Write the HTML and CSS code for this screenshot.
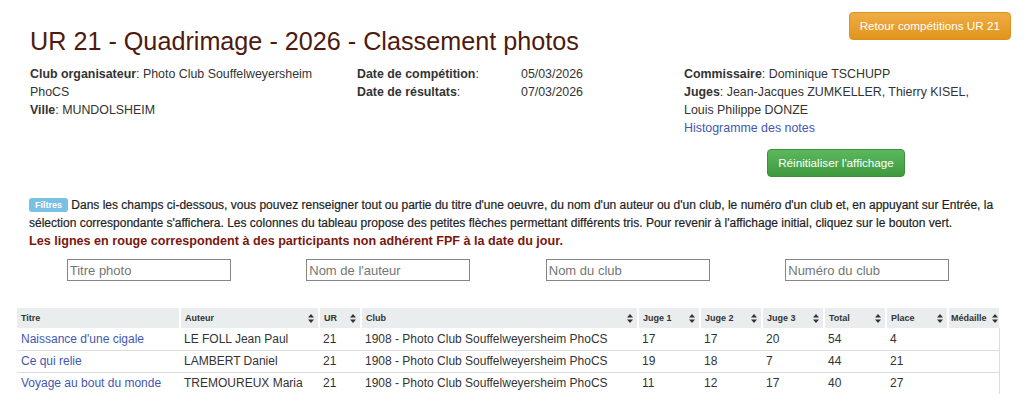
FILE: index.html
```html
<!DOCTYPE html>
<html lang="fr">
<head>
<meta charset="utf-8">
<title>UR 21 - Quadrimage - 2026 - Classement photos</title>
<link rel="stylesheet" href="styles.css">
</head>
<body>
<div class="top">
  <h1 class="title">UR 21 - Quadrimage - 2026 - Classement photos</h1>
  <a class="btn btn-warning" href="#">Retour compétitions UR 21</a>
</div>

<div class="info">
  <div class="col">
    <div><b>Club organisateur</b>: Photo Club Souffelweyersheim PhoCS</div>
    <div><b>Ville</b>: MUNDOLSHEIM</div>
  </div>
  <div class="col dates">
    <b>Date de compétition</b><span class="val">05/03/2026</span>
    <b>Date de résultats</b><span class="val">07/03/2026</span>
  </div>
  <div class="col">
    <div><b>Commissaire</b>: Dominique TSCHUPP</div>
    <div><b>Juges</b>: Jean-Jacques ZUMKELLER, Thierry KISEL, Louis Philippe DONZE</div>
    <div><a class="link" href="#">Histogramme des notes</a></div>
    <div class="reset-wrap"><a class="btn btn-success" href="#">Réinitialiser l'affichage</a></div>
  </div>
</div>

<div class="filters">
  <p class="help"><span class="label-info">Filtres</span> Dans les champs ci-dessous, vous pouvez renseigner tout ou partie du titre d'une oeuvre, du nom d'un auteur ou d'un club, le numéro d'un club et, en appuyant sur Entrée, la sélection correspondante s'affichera. Les colonnes du tableau propose des petites flèches permettant différents tris. Pour revenir à l'affichage initial, cliquez sur le bouton vert.</p>
  <p class="warn">Les lignes en rouge correspondent à des participants non adhérent FPF à la date du jour.</p>
</div>

<div class="search">
  <input type="text" placeholder="Titre photo">
  <input type="text" placeholder="Nom de l'auteur">
  <input type="text" placeholder="Nom du club">
  <input type="text" placeholder="Numéro du club">
</div>

<table class="results">
  <colgroup>
    <col class="c-titre"><col class="c-auteur"><col class="c-ur"><col class="c-club">
    <col class="c-j"><col class="c-j"><col class="c-j"><col class="c-j"><col class="c-j"><col class="c-med">
  </colgroup>
  <thead>
    <tr>
      <th><div class="th">Titre</div></th>
      <th><div class="th">Auteur<svg class="sort" viewBox="0 0 6 9"><path d="M3 0L6 3.6H0Z M3 9L6 5.4H0Z"/></svg></div></th>
      <th><div class="th">UR<svg class="sort" viewBox="0 0 6 9"><path d="M3 0L6 3.6H0Z M3 9L6 5.4H0Z"/></svg></div></th>
      <th><div class="th">Club<svg class="sort" viewBox="0 0 6 9"><path d="M3 0L6 3.6H0Z M3 9L6 5.4H0Z"/></svg></div></th>
      <th><div class="th">Juge 1<svg class="sort" viewBox="0 0 6 9"><path d="M3 0L6 3.6H0Z M3 9L6 5.4H0Z"/></svg></div></th>
      <th><div class="th">Juge 2<svg class="sort" viewBox="0 0 6 9"><path d="M3 0L6 3.6H0Z M3 9L6 5.4H0Z"/></svg></div></th>
      <th><div class="th">Juge 3<svg class="sort" viewBox="0 0 6 9"><path d="M3 0L6 3.6H0Z M3 9L6 5.4H0Z"/></svg></div></th>
      <th><div class="th">Total<svg class="sort" viewBox="0 0 6 9"><path d="M3 0L6 3.6H0Z M3 9L6 5.4H0Z"/></svg></div></th>
      <th><div class="th">Place<svg class="sort" viewBox="0 0 6 9"><path d="M3 0L6 3.6H0Z M3 9L6 5.4H0Z"/></svg></div></th>
      <th><div class="th th-tight">Médaille<svg class="sort" viewBox="0 0 6 9"><path d="M3 0L6 3.6H0Z M3 9L6 5.4H0Z"/></svg></div></th>
    </tr>
  </thead>
  <tbody>
    <tr>
      <td><a class="link" href="#">Naissance d'une cigale</a></td>
      <td>LE FOLL Jean Paul</td><td>21</td><td>1908 - Photo Club Souffelweyersheim PhoCS</td>
      <td>17</td><td>17</td><td>20</td><td>54</td><td>4</td><td></td>
    </tr>
    <tr>
      <td><a class="link" href="#">Ce qui relie</a></td>
      <td>LAMBERT Daniel</td><td>21</td><td>1908 - Photo Club Souffelweyersheim PhoCS</td>
      <td>19</td><td>18</td><td>7</td><td>44</td><td>21</td><td></td>
    </tr>
    <tr>
      <td><a class="link" href="#">Voyage au bout du monde</a></td>
      <td>TREMOUREUX Maria</td><td>21</td><td>1908 - Photo Club Souffelweyersheim PhoCS</td>
      <td>11</td><td>12</td><td>17</td><td>40</td><td>27</td><td></td>
    </tr>
  </tbody>
</table>
</body>
</html>
```

FILE: styles.css
```css
* { box-sizing: border-box; }

body {
  margin: 0;
  font-family: "Liberation Sans", Arial, sans-serif;
  font-size: 12px;
  line-height: 18px;
  color: #333;
  background: #fff;
}

a { text-decoration: none; }
.link { color: #4257b2; }

.top {
  display: flex;
  justify-content: space-between;
  align-items: flex-start;
  padding: 0 13px 0 30px;
}

.title {
  margin: 26px 0 0;
  font-size: 25.2px;
  line-height: 30px;
  font-weight: normal;
  color: #4e1a0e;
}

.btn {
  display: inline-block;
  height: 28px;
  line-height: 26px;
  padding: 0 10px;
  font-size: 11.7px;
  color: #fff;
  border-radius: 4px;
  white-space: nowrap;
}

.btn-warning {
  margin-top: 12px;
  background: linear-gradient(#efab45, #e0961d);
  border: 1px solid #d99320;
}

.btn-success {
  margin-left: 4px;
  background: linear-gradient(#5cb85c, #3f9a3f);
  border: 1px solid #3d8f3d;
}

.info {
  display: grid;
  grid-template-columns: 312px 312px 300px;
  column-gap: 15px;
  padding-left: 30px;
  margin-top: 9px;
  font-size: 12.4px;
}

.dates {
  display: grid;
  grid-template-columns: 164px 1fr;
  align-content: start;
}
.dates b::after { content: ":"; font-weight: normal; }

.reset-wrap {
  display: flex;
  justify-content: center;
  margin-top: 12px;
}

.filters {
  padding: 0 18px 0 29px;
  margin-top: 19px;
}

.help {
  margin: 0;
  font-size: 12px;
  line-height: 18px;
  color: #1e1e1e;
  -webkit-text-stroke: 0.2px #1e1e1e;
}

.label-info {
  display: inline-block;
  background: #79c0e2;
  color: #fff;
  font-size: 9px;
  font-weight: bold;
  line-height: 14px;
  padding: 0 6px;
  border-radius: 3px;
  vertical-align: 1px;
  -webkit-text-stroke: 0;
}

.warn {
  margin: 0;
  font-size: 12.6px;
  line-height: 18px;
  font-weight: bold;
  color: #7a1610;
}

.search {
  display: grid;
  grid-template-columns: repeat(4, 239.5px);
  justify-items: center;
  padding-left: 29px;
  margin-top: 9px;
}

.search input {
  width: 164px;
  height: 22px;
  border: 1px solid #858585;
  padding: 0 2px;
  font-family: "Liberation Sans", Arial, sans-serif;
  font-size: 13px;
  color: #333;
  outline: none;
}
.search input::placeholder { color: #757575; }

.results {
  margin: 27px 0 0 17px;
  width: 982px;
  table-layout: fixed;
  border-collapse: collapse;
}

.c-titre { width: 163px; }
.c-auteur { width: 139px; }
.c-ur { width: 42px; }
.c-club { width: 277px; }
.c-j { width: 62px; }
.c-med { width: 51px; }

.results th {
  background: #e9eded;
  height: 20px;
  padding: 0;
  border-left: 2px solid #fff;
  text-align: left;
  font-size: 9px;
  font-weight: bold;
  color: #333;
}
.results th:first-child { border-left: 0; }

.th {
  display: flex;
  justify-content: space-between;
  align-items: center;
  padding: 0 4px;
}
.th-tight { padding: 0 1px 0 2px; }

.sort {
  width: 6px;
  height: 9px;
  fill: #333;
  flex: none;
}

.results td {
  height: 22px;
  padding: 0 4px;
  font-size: 12px;
  line-height: 16px;
  white-space: nowrap;
  overflow: hidden;
}
.results tbody tr:not(:last-child) td { border-bottom: 1px solid #dcdcdc; }
.results td:last-child { border-right: 1px solid #dcdcdc; }
```
